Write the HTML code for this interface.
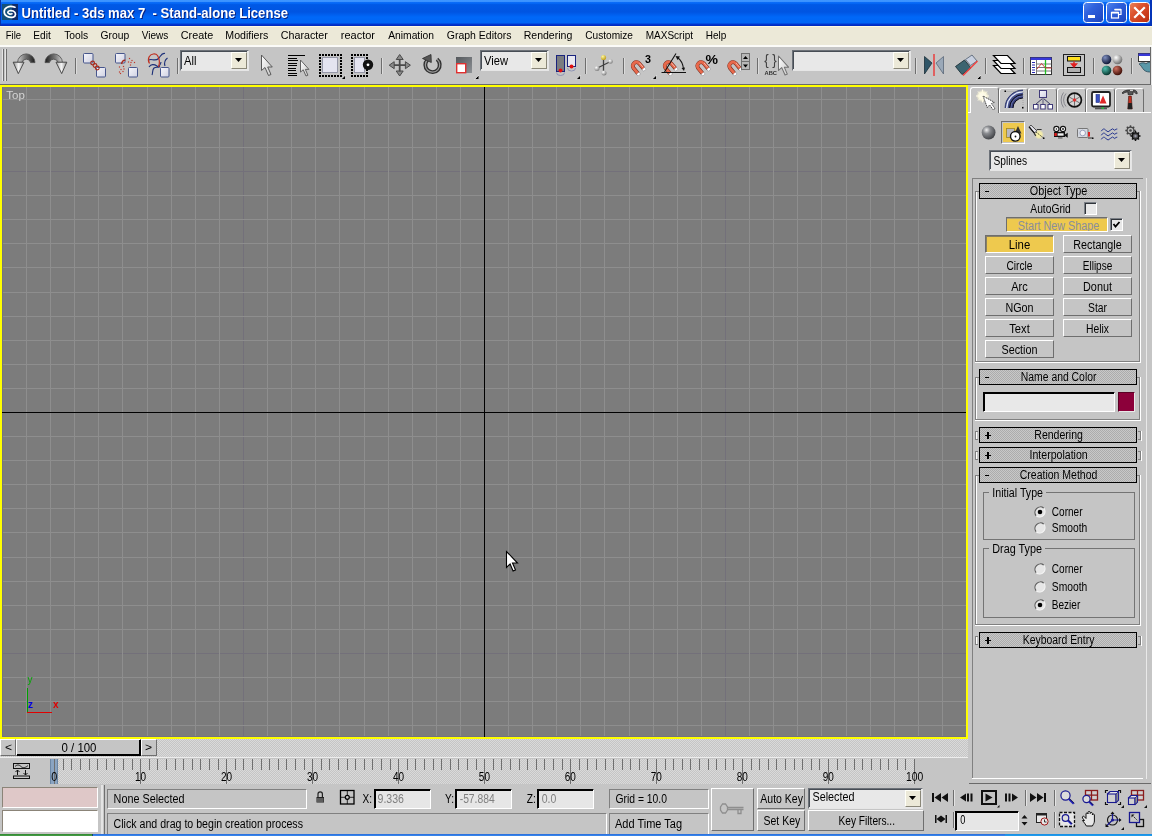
<!DOCTYPE html>
<html><head><meta charset="utf-8"><title>Untitled - 3ds max 7 - Stand-alone License</title>
<style>
html,body{margin:0;padding:0;background:#c5c5c5;overflow:hidden}
#app{position:relative;width:1152px;height:836px;overflow:hidden;background:#c5c5c5;font-family:"Liberation Sans",sans-serif}
#app div,#app svg{position:absolute;box-sizing:content-box}
#txt{will-change:transform}
#txt text{font-family:"Liberation Sans",sans-serif;white-space:pre}
</style></head><body><div id="app">
<div style="left:0px;top:0px;width:1152px;height:26px;background:linear-gradient(#3d96ff 0,#3a92ff 1.6px,#0a6cf8 2.4px,#0466f4 3.6px,#0059e6 4.6px,#0055e2 12px,#0060f0 15px,#0068f8 17px,#0066f6 22.6px,#0048dc 23.8px,#0030cc 24.6px,#0028ba 26px);"></div>
<div style="left:0px;top:0px;width:1px;height:26px;background:#0831a8;"></div>
<div style="left:1150px;top:0px;width:2px;height:26px;background:#0434b8;"></div>
<svg style="left:2px;top:4px" width="16" height="16" viewBox="0 0 16 16"><rect width="16" height="16" fill="#14507a"/><rect x="10" y="0" width="6" height="16" fill="#102a66"/><path d="M13 3.2C7 1.2 2 3.5 2.2 8c.2 4.5 5 6 9 5.2 3-1 3.2-4.8 0-6.2-2.4-.8-5.2-.4-5.4 1.400c.3 1.5 2.4 2 4.2 1.4" fill="none" stroke="#fff" stroke-width="1.7" stroke-linecap="round"/></svg>
<div style="left:1083px;top:2px;width:19px;height:19px;border:1px solid #fff;border-radius:3.5px;background:linear-gradient(135deg,#4f84ee 0,#2f62dd 35%,#2450cc 75%,#1c44b8 100%)"></div>
<div style="left:1106px;top:2px;width:19px;height:19px;border:1px solid #fff;border-radius:3.5px;background:linear-gradient(135deg,#4f84ee 0,#2f62dd 35%,#2450cc 75%,#1c44b8 100%)"></div>
<div style="left:1129px;top:2px;width:19px;height:19px;border:1px solid #fff;border-radius:3.5px;background:linear-gradient(135deg,#e8835a 0,#dd5530 35%,#c93a1a 75%,#b83010 100%)"></div>
<div style="left:1088px;top:15px;width:7px;height:3px;background:#fff;"></div>
<svg style="left:1106px;top:2px" width="21" height="21" viewBox="0 0 21 21"><path d="M8.5 7.500h6.500v5h-2" fill="none" stroke="#fff" stroke-width="1.2"/><rect x="5.5" y="10.5" width="7" height="5.5" fill="none" stroke="#fff" stroke-width="1.2"/><path d="M5.5 10.700h7M8.5 7.700h6.5" stroke="#fff" stroke-width="1.8"/></svg>
<svg style="left:1129px;top:2px" width="21" height="21" viewBox="0 0 21 21"><path d="M6 6l9 9M15 6l-9 9" stroke="#fff" stroke-width="2.2" stroke-linecap="square"/></svg>
<div style="left:0px;top:26px;width:1152px;height:19px;background:#ece9d8;"></div>
<div style="left:0px;top:26px;width:1152px;height:1px;background:#fdfae2;"></div>
<div style="left:0px;top:45px;width:1152px;height:2px;background:#fbfbf8;"></div>
<div style="left:0px;top:47px;width:1152px;height:37px;background:#c5c5c5;"></div>
<div style="left:0px;top:84px;width:1151px;height:1px;background:#6a6a6a;"></div>
<div style="left:1150px;top:47px;width:1px;height:38px;background:#6a6a6a;"></div>
<div style="left:1151px;top:47px;width:1px;height:38px;background:#e8e8e8;"></div>
<div style="left:3px;top:49px;width:1px;height:32px;background:#6e6e6e;"></div>
<div style="left:2px;top:49px;width:1px;height:32px;background:#e4e4e4;"></div>
<div style="left:6px;top:49px;width:1px;height:32px;background:#6e6e6e;"></div>
<div style="left:5px;top:49px;width:1px;height:32px;background:#e4e4e4;"></div>
<div style="left:75px;top:58px;width:1px;height:16px;background:#6e6e6e;"></div>
<div style="left:76px;top:58px;width:1px;height:16px;background:#dcdcdc;"></div>
<div style="left:177px;top:58px;width:1px;height:16px;background:#6e6e6e;"></div>
<div style="left:178px;top:58px;width:1px;height:16px;background:#dcdcdc;"></div>
<div style="left:381px;top:58px;width:1px;height:16px;background:#6e6e6e;"></div>
<div style="left:382px;top:58px;width:1px;height:16px;background:#dcdcdc;"></div>
<div style="left:585px;top:58px;width:1px;height:16px;background:#6e6e6e;"></div>
<div style="left:586px;top:58px;width:1px;height:16px;background:#dcdcdc;"></div>
<div style="left:623px;top:58px;width:1px;height:16px;background:#6e6e6e;"></div>
<div style="left:624px;top:58px;width:1px;height:16px;background:#dcdcdc;"></div>
<div style="left:757px;top:58px;width:1px;height:16px;background:#6e6e6e;"></div>
<div style="left:758px;top:58px;width:1px;height:16px;background:#dcdcdc;"></div>
<div style="left:915px;top:58px;width:1px;height:16px;background:#6e6e6e;"></div>
<div style="left:916px;top:58px;width:1px;height:16px;background:#dcdcdc;"></div>
<div style="left:985px;top:58px;width:1px;height:16px;background:#6e6e6e;"></div>
<div style="left:986px;top:58px;width:1px;height:16px;background:#dcdcdc;"></div>
<div style="left:1023px;top:58px;width:1px;height:16px;background:#6e6e6e;"></div>
<div style="left:1024px;top:58px;width:1px;height:16px;background:#dcdcdc;"></div>
<div style="left:1093px;top:58px;width:1px;height:16px;background:#6e6e6e;"></div>
<div style="left:1094px;top:58px;width:1px;height:16px;background:#dcdcdc;"></div>
<div style="left:1131px;top:58px;width:1px;height:16px;background:#6e6e6e;"></div>
<div style="left:1132px;top:58px;width:1px;height:16px;background:#dcdcdc;"></div>
<div style="left:180px;top:50px;width:67px;height:19px;background:#e8e8e8;border:1px solid;border-color:#6c7178 #e6e6e6 #e6e6e6 #6c7178;"></div>
<div style="left:181px;top:51px;width:66px;height:1px;background:#474d55;"></div>
<div style="left:181px;top:51px;width:1px;height:18px;background:#474d55;"></div>
<div style="left:231px;top:52px;width:14px;height:15px;background:#ece9d8;border:1px solid;border-color:#fffff8 #8a8778 #8a8778 #fffff8;"></div>
<svg style="left:235px;top:58px" width="8" height="5" viewBox="0 0 8 5"><path d="M0 0h7l-3.5 4z" fill="#000"/></svg>
<div style="left:480px;top:50px;width:67px;height:19px;background:#e8e8e8;border:1px solid;border-color:#6c7178 #e6e6e6 #e6e6e6 #6c7178;"></div>
<div style="left:481px;top:51px;width:66px;height:1px;background:#474d55;"></div>
<div style="left:481px;top:51px;width:1px;height:18px;background:#474d55;"></div>
<div style="left:531px;top:52px;width:14px;height:15px;background:#ece9d8;border:1px solid;border-color:#fffff8 #8a8778 #8a8778 #fffff8;"></div>
<svg style="left:535px;top:58px" width="8" height="5" viewBox="0 0 8 5"><path d="M0 0h7l-3.5 4z" fill="#000"/></svg>
<div style="left:792px;top:50px;width:117px;height:19px;background:#e8e8e8;border:1px solid;border-color:#6c7178 #e6e6e6 #e6e6e6 #6c7178;"></div>
<div style="left:793px;top:51px;width:116px;height:1px;background:#474d55;"></div>
<div style="left:793px;top:51px;width:1px;height:18px;background:#474d55;"></div>
<div style="left:893px;top:52px;width:14px;height:15px;background:#ece9d8;border:1px solid;border-color:#fffff8 #8a8778 #8a8778 #fffff8;"></div>
<svg style="left:897px;top:58px" width="8" height="5" viewBox="0 0 8 5"><path d="M0 0h7l-3.5 4z" fill="#000"/></svg>
<div style="left:0px;top:85px;width:964px;height:650px;background:#7c7c7c;border:2px solid #ffff00"></div>
<svg style="left:0px;top:0px" width="968" height="740" viewBox="0 0 968 740" shape-rendering="crispEdges"><rect x="243" y="87" width="1" height="650" fill="#73707a"/><rect x="725" y="87" width="1" height="650" fill="#73707a"/><rect x="3" y="171" width="963" height="1" fill="#73707a"/><rect x="3" y="653" width="963" height="1" fill="#73707a"/><rect x="26" y="87" width="1" height="650" fill="#8e8e8e"/><rect x="50" y="87" width="1" height="650" fill="#8e8e8e"/><rect x="74" y="87" width="1" height="650" fill="#8e8e8e"/><rect x="98" y="87" width="1" height="650" fill="#8e8e8e"/><rect x="122" y="87" width="1" height="650" fill="#8e8e8e"/><rect x="147" y="87" width="1" height="650" fill="#8e8e8e"/><rect x="171" y="87" width="1" height="650" fill="#8e8e8e"/><rect x="195" y="87" width="1" height="650" fill="#8e8e8e"/><rect x="219" y="87" width="1" height="650" fill="#8e8e8e"/><rect x="267" y="87" width="1" height="650" fill="#8e8e8e"/><rect x="291" y="87" width="1" height="650" fill="#8e8e8e"/><rect x="315" y="87" width="1" height="650" fill="#8e8e8e"/><rect x="339" y="87" width="1" height="650" fill="#8e8e8e"/><rect x="364" y="87" width="1" height="650" fill="#8e8e8e"/><rect x="388" y="87" width="1" height="650" fill="#8e8e8e"/><rect x="412" y="87" width="1" height="650" fill="#8e8e8e"/><rect x="436" y="87" width="1" height="650" fill="#8e8e8e"/><rect x="460" y="87" width="1" height="650" fill="#8e8e8e"/><rect x="508" y="87" width="1" height="650" fill="#8e8e8e"/><rect x="532" y="87" width="1" height="650" fill="#8e8e8e"/><rect x="556" y="87" width="1" height="650" fill="#8e8e8e"/><rect x="580" y="87" width="1" height="650" fill="#8e8e8e"/><rect x="604" y="87" width="1" height="650" fill="#8e8e8e"/><rect x="629" y="87" width="1" height="650" fill="#8e8e8e"/><rect x="653" y="87" width="1" height="650" fill="#8e8e8e"/><rect x="677" y="87" width="1" height="650" fill="#8e8e8e"/><rect x="701" y="87" width="1" height="650" fill="#8e8e8e"/><rect x="749" y="87" width="1" height="650" fill="#8e8e8e"/><rect x="773" y="87" width="1" height="650" fill="#8e8e8e"/><rect x="797" y="87" width="1" height="650" fill="#8e8e8e"/><rect x="821" y="87" width="1" height="650" fill="#8e8e8e"/><rect x="846" y="87" width="1" height="650" fill="#8e8e8e"/><rect x="870" y="87" width="1" height="650" fill="#8e8e8e"/><rect x="894" y="87" width="1" height="650" fill="#8e8e8e"/><rect x="918" y="87" width="1" height="650" fill="#8e8e8e"/><rect x="942" y="87" width="1" height="650" fill="#8e8e8e"/><rect x="3" y="99" width="963" height="1" fill="#8e8e8e"/><rect x="3" y="123" width="963" height="1" fill="#8e8e8e"/><rect x="3" y="147" width="963" height="1" fill="#8e8e8e"/><rect x="3" y="195" width="963" height="1" fill="#8e8e8e"/><rect x="3" y="219" width="963" height="1" fill="#8e8e8e"/><rect x="3" y="243" width="963" height="1" fill="#8e8e8e"/><rect x="3" y="267" width="963" height="1" fill="#8e8e8e"/><rect x="3" y="292" width="963" height="1" fill="#8e8e8e"/><rect x="3" y="316" width="963" height="1" fill="#8e8e8e"/><rect x="3" y="340" width="963" height="1" fill="#8e8e8e"/><rect x="3" y="364" width="963" height="1" fill="#8e8e8e"/><rect x="3" y="388" width="963" height="1" fill="#8e8e8e"/><rect x="3" y="436" width="963" height="1" fill="#8e8e8e"/><rect x="3" y="460" width="963" height="1" fill="#8e8e8e"/><rect x="3" y="484" width="963" height="1" fill="#8e8e8e"/><rect x="3" y="508" width="963" height="1" fill="#8e8e8e"/><rect x="3" y="532" width="963" height="1" fill="#8e8e8e"/><rect x="3" y="557" width="963" height="1" fill="#8e8e8e"/><rect x="3" y="581" width="963" height="1" fill="#8e8e8e"/><rect x="3" y="605" width="963" height="1" fill="#8e8e8e"/><rect x="3" y="629" width="963" height="1" fill="#8e8e8e"/><rect x="3" y="677" width="963" height="1" fill="#8e8e8e"/><rect x="3" y="701" width="963" height="1" fill="#8e8e8e"/><rect x="3" y="725" width="963" height="1" fill="#8e8e8e"/><rect x="2" y="87" width="1" height="650" fill="#737380"/><rect x="2" y="736" width="964" height="1" fill="#737380"/><rect x="484" y="87" width="1" height="650" fill="#000"/><rect x="2" y="412" width="964" height="1" fill="#000"/><rect x="27" y="688" width="1" height="25" fill="#00a000"/><rect x="27" y="712" width="25" height="1" fill="#e00000"/></svg>
<svg style="left:505px;top:550px" width="14" height="23" viewBox="0 0 14 23"><path d="M1.5 1.500v16l3.6-3.5 3 7 2.4-1-3-7h5z" fill="#fff" stroke="#000" stroke-width="1.1" stroke-linejoin="miter"/></svg>
<div style="left:0px;top:739px;width:968px;height:18px;background:repeating-conic-gradient(#dadada 0 25%, #c5c5c5 0 50%) 0 0/2px 2px;"></div>
<div style="left:0px;top:757px;width:968px;height:1px;background:#ededed;"></div>
<div style="left:0px;top:739px;width:14px;height:15px;background:#c5c5c5;border:1px solid;border-color:#fff #6e6e6e #6e6e6e #fff;"></div>
<div style="left:141px;top:739px;width:14px;height:15px;background:#c5c5c5;border:1px solid;border-color:#fff #6e6e6e #6e6e6e #fff;"></div>
<div style="left:16px;top:739px;width:123px;height:15px;background:#c5c5c5;border:1px solid;border-color:#fff #000 #000 #fff;"></div>
<div style="left:17px;top:754px;width:124px;height:1px;background:#000;"></div>
<div style="left:139px;top:740px;width:1px;height:15px;background:#000;"></div>
<div style="left:50px;top:759px;width:865px;height:25px;background:repeating-conic-gradient(#dadada 0 25%, #c5c5c5 0 50%) 0 0/2px 2px;"></div>
<div style="left:50px;top:759px;width:8px;height:25px;background:#8aa4c2;"></div>
<div style="left:50px;top:759px;width:1px;height:25px;background:#6d87a5;"></div>
<div style="left:57px;top:759px;width:1px;height:25px;background:#6d87a5;"></div>
<svg style="left:0px;top:0px" width="968" height="790" viewBox="0 0 968 790" shape-rendering="crispEdges"><rect x="54" y="759" width="1" height="25" fill="#6f6f6f"/><rect x="63" y="759" width="1" height="11" fill="#6f6f6f"/><rect x="71" y="759" width="1" height="11" fill="#6f6f6f"/><rect x="80" y="759" width="1" height="11" fill="#6f6f6f"/><rect x="89" y="759" width="1" height="11" fill="#6f6f6f"/><rect x="97" y="759" width="1" height="11" fill="#6f6f6f"/><rect x="106" y="759" width="1" height="11" fill="#6f6f6f"/><rect x="114" y="759" width="1" height="11" fill="#6f6f6f"/><rect x="123" y="759" width="1" height="11" fill="#6f6f6f"/><rect x="132" y="759" width="1" height="11" fill="#6f6f6f"/><rect x="140" y="759" width="1" height="25" fill="#6f6f6f"/><rect x="149" y="759" width="1" height="11" fill="#6f6f6f"/><rect x="157" y="759" width="1" height="11" fill="#6f6f6f"/><rect x="166" y="759" width="1" height="11" fill="#6f6f6f"/><rect x="175" y="759" width="1" height="11" fill="#6f6f6f"/><rect x="183" y="759" width="1" height="11" fill="#6f6f6f"/><rect x="192" y="759" width="1" height="11" fill="#6f6f6f"/><rect x="200" y="759" width="1" height="11" fill="#6f6f6f"/><rect x="209" y="759" width="1" height="11" fill="#6f6f6f"/><rect x="218" y="759" width="1" height="11" fill="#6f6f6f"/><rect x="226" y="759" width="1" height="25" fill="#6f6f6f"/><rect x="235" y="759" width="1" height="11" fill="#6f6f6f"/><rect x="243" y="759" width="1" height="11" fill="#6f6f6f"/><rect x="252" y="759" width="1" height="11" fill="#6f6f6f"/><rect x="261" y="759" width="1" height="11" fill="#6f6f6f"/><rect x="269" y="759" width="1" height="11" fill="#6f6f6f"/><rect x="278" y="759" width="1" height="11" fill="#6f6f6f"/><rect x="286" y="759" width="1" height="11" fill="#6f6f6f"/><rect x="295" y="759" width="1" height="11" fill="#6f6f6f"/><rect x="304" y="759" width="1" height="11" fill="#6f6f6f"/><rect x="312" y="759" width="1" height="25" fill="#6f6f6f"/><rect x="321" y="759" width="1" height="11" fill="#6f6f6f"/><rect x="329" y="759" width="1" height="11" fill="#6f6f6f"/><rect x="338" y="759" width="1" height="11" fill="#6f6f6f"/><rect x="347" y="759" width="1" height="11" fill="#6f6f6f"/><rect x="355" y="759" width="1" height="11" fill="#6f6f6f"/><rect x="364" y="759" width="1" height="11" fill="#6f6f6f"/><rect x="372" y="759" width="1" height="11" fill="#6f6f6f"/><rect x="381" y="759" width="1" height="11" fill="#6f6f6f"/><rect x="390" y="759" width="1" height="11" fill="#6f6f6f"/><rect x="398" y="759" width="1" height="25" fill="#6f6f6f"/><rect x="407" y="759" width="1" height="11" fill="#6f6f6f"/><rect x="415" y="759" width="1" height="11" fill="#6f6f6f"/><rect x="424" y="759" width="1" height="11" fill="#6f6f6f"/><rect x="433" y="759" width="1" height="11" fill="#6f6f6f"/><rect x="441" y="759" width="1" height="11" fill="#6f6f6f"/><rect x="450" y="759" width="1" height="11" fill="#6f6f6f"/><rect x="458" y="759" width="1" height="11" fill="#6f6f6f"/><rect x="467" y="759" width="1" height="11" fill="#6f6f6f"/><rect x="476" y="759" width="1" height="11" fill="#6f6f6f"/><rect x="484" y="759" width="1" height="25" fill="#6f6f6f"/><rect x="493" y="759" width="1" height="11" fill="#6f6f6f"/><rect x="501" y="759" width="1" height="11" fill="#6f6f6f"/><rect x="510" y="759" width="1" height="11" fill="#6f6f6f"/><rect x="519" y="759" width="1" height="11" fill="#6f6f6f"/><rect x="527" y="759" width="1" height="11" fill="#6f6f6f"/><rect x="536" y="759" width="1" height="11" fill="#6f6f6f"/><rect x="544" y="759" width="1" height="11" fill="#6f6f6f"/><rect x="553" y="759" width="1" height="11" fill="#6f6f6f"/><rect x="562" y="759" width="1" height="11" fill="#6f6f6f"/><rect x="570" y="759" width="1" height="25" fill="#6f6f6f"/><rect x="579" y="759" width="1" height="11" fill="#6f6f6f"/><rect x="587" y="759" width="1" height="11" fill="#6f6f6f"/><rect x="596" y="759" width="1" height="11" fill="#6f6f6f"/><rect x="605" y="759" width="1" height="11" fill="#6f6f6f"/><rect x="613" y="759" width="1" height="11" fill="#6f6f6f"/><rect x="622" y="759" width="1" height="11" fill="#6f6f6f"/><rect x="630" y="759" width="1" height="11" fill="#6f6f6f"/><rect x="639" y="759" width="1" height="11" fill="#6f6f6f"/><rect x="647" y="759" width="1" height="11" fill="#6f6f6f"/><rect x="656" y="759" width="1" height="25" fill="#6f6f6f"/><rect x="665" y="759" width="1" height="11" fill="#6f6f6f"/><rect x="673" y="759" width="1" height="11" fill="#6f6f6f"/><rect x="682" y="759" width="1" height="11" fill="#6f6f6f"/><rect x="690" y="759" width="1" height="11" fill="#6f6f6f"/><rect x="699" y="759" width="1" height="11" fill="#6f6f6f"/><rect x="708" y="759" width="1" height="11" fill="#6f6f6f"/><rect x="716" y="759" width="1" height="11" fill="#6f6f6f"/><rect x="725" y="759" width="1" height="11" fill="#6f6f6f"/><rect x="733" y="759" width="1" height="11" fill="#6f6f6f"/><rect x="742" y="759" width="1" height="25" fill="#6f6f6f"/><rect x="751" y="759" width="1" height="11" fill="#6f6f6f"/><rect x="759" y="759" width="1" height="11" fill="#6f6f6f"/><rect x="768" y="759" width="1" height="11" fill="#6f6f6f"/><rect x="776" y="759" width="1" height="11" fill="#6f6f6f"/><rect x="785" y="759" width="1" height="11" fill="#6f6f6f"/><rect x="794" y="759" width="1" height="11" fill="#6f6f6f"/><rect x="802" y="759" width="1" height="11" fill="#6f6f6f"/><rect x="811" y="759" width="1" height="11" fill="#6f6f6f"/><rect x="819" y="759" width="1" height="11" fill="#6f6f6f"/><rect x="828" y="759" width="1" height="25" fill="#6f6f6f"/><rect x="837" y="759" width="1" height="11" fill="#6f6f6f"/><rect x="845" y="759" width="1" height="11" fill="#6f6f6f"/><rect x="854" y="759" width="1" height="11" fill="#6f6f6f"/><rect x="862" y="759" width="1" height="11" fill="#6f6f6f"/><rect x="871" y="759" width="1" height="11" fill="#6f6f6f"/><rect x="880" y="759" width="1" height="11" fill="#6f6f6f"/><rect x="888" y="759" width="1" height="11" fill="#6f6f6f"/><rect x="897" y="759" width="1" height="11" fill="#6f6f6f"/><rect x="905" y="759" width="1" height="11" fill="#6f6f6f"/><rect x="914" y="759" width="1" height="25" fill="#6f6f6f"/></svg>
<div style="left:0px;top:784px;width:968px;height:1px;background:#c5c5c5;"></div>
<div style="left:2px;top:787px;width:94px;height:19px;background:#dfc8c8;border:1px solid;border-color:#8b8478 #fff #fff #8b8478;"></div>
<div style="left:2px;top:810px;width:94px;height:20px;background:#ffffff;border:1px solid;border-color:#8b8478 #fff #fff #8b8478;"></div>
<div style="left:101px;top:785px;width:2px;height:49px;background:#e4e4e4;"></div>
<div style="left:104px;top:785px;width:1px;height:49px;background:#707070;"></div>
<div style="left:107px;top:789px;width:198px;height:18px;background:#c5c5c5;border:1px solid;border-color:#808080 #fff #fff #808080;"></div>
<div style="left:107px;top:813px;width:498px;height:20px;background:#c5c5c5;border:1px solid;border-color:#808080 #fff #fff #808080;"></div>
<div style="left:374px;top:789px;width:55px;height:18px;background:#e6e6e6;border:1px solid;border-color:#000 #fff #fff #000;"></div>
<div style="left:375px;top:790px;width:55px;height:1px;background:#000;"></div>
<div style="left:375px;top:790px;width:1px;height:18px;background:#000;"></div>
<div style="left:455px;top:789px;width:55px;height:18px;background:#e6e6e6;border:1px solid;border-color:#000 #fff #fff #000;"></div>
<div style="left:456px;top:790px;width:55px;height:1px;background:#000;"></div>
<div style="left:456px;top:790px;width:1px;height:18px;background:#000;"></div>
<div style="left:537px;top:789px;width:55px;height:18px;background:#e6e6e6;border:1px solid;border-color:#000 #fff #fff #000;"></div>
<div style="left:538px;top:790px;width:55px;height:1px;background:#000;"></div>
<div style="left:538px;top:790px;width:1px;height:18px;background:#000;"></div>
<div style="left:609px;top:789px;width:98px;height:18px;background:#c5c5c5;border:1px solid;border-color:#808080 #fff #fff #808080;"></div>
<div style="left:609px;top:813px;width:98px;height:20px;background:#c5c5c5;border:1px solid;border-color:#808080 #fff #fff #808080;"></div>
<div style="left:711px;top:788px;width:41px;height:41px;background:#c5c5c5;border:1px solid;border-color:#fff #6e6e6e #6e6e6e #fff;"></div>
<div style="left:757px;top:788px;width:46px;height:19px;background:#c5c5c5;border:1px solid;border-color:#fff #6e6e6e #6e6e6e #fff;"></div>
<div style="left:757px;top:810px;width:46px;height:19px;background:#c5c5c5;border:1px solid;border-color:#fff #6e6e6e #6e6e6e #fff;"></div>
<div style="left:808px;top:788px;width:113px;height:19px;background:#e8e8e8;border:1px solid;border-color:#6c7178 #e6e6e6 #e6e6e6 #6c7178;"></div>
<div style="left:809px;top:789px;width:112px;height:1px;background:#474d55;"></div>
<div style="left:809px;top:789px;width:1px;height:18px;background:#474d55;"></div>
<div style="left:905px;top:790px;width:14px;height:15px;background:#ece9d8;border:1px solid;border-color:#fffff8 #8a8778 #8a8778 #fffff8;"></div>
<svg style="left:909px;top:796px" width="8" height="5" viewBox="0 0 8 5"><path d="M0 0h7l-3.5 4z" fill="#000"/></svg>
<div style="left:808px;top:810px;width:114px;height:19px;background:#c5c5c5;border:1px solid;border-color:#fff #6e6e6e #6e6e6e #fff;"></div>
<div style="left:955px;top:811px;width:62px;height:18px;background:#e6e6e6;border:1px solid;border-color:#000 #fff #fff #000;"></div>
<div style="left:956px;top:812px;width:62px;height:1px;background:#000;"></div>
<div style="left:956px;top:812px;width:1px;height:18px;background:#000;"></div>
<div style="left:953px;top:790px;width:1px;height:16px;background:#6e6e6e;"></div>
<div style="left:954px;top:790px;width:1px;height:16px;background:#e4e4e4;"></div>
<div style="left:1025px;top:790px;width:1px;height:16px;background:#6e6e6e;"></div>
<div style="left:1026px;top:790px;width:1px;height:16px;background:#e4e4e4;"></div>
<div style="left:1054px;top:790px;width:1px;height:16px;background:#6e6e6e;"></div>
<div style="left:1055px;top:790px;width:1px;height:16px;background:#e4e4e4;"></div>
<div style="left:953px;top:812px;width:1px;height:16px;background:#6e6e6e;"></div>
<div style="left:954px;top:812px;width:1px;height:16px;background:#e4e4e4;"></div>
<div style="left:1054px;top:812px;width:1px;height:16px;background:#6e6e6e;"></div>
<div style="left:1055px;top:812px;width:1px;height:16px;background:#e4e4e4;"></div>
<div style="left:0px;top:834px;width:1152px;height:2px;background:linear-gradient(#2a6ad8,#3a8cf0);"></div>
<div style="left:0px;top:834px;width:92px;height:2px;background:linear-gradient(#2d8a2d,#4a9c4a);"></div>
<div style="left:92px;top:834px;width:1px;height:2px;background:#1c4a60;"></div>
<div style="left:1005px;top:834px;width:147px;height:2px;background:linear-gradient(#1a8ce0,#22a0f0);"></div>
<div style="left:968px;top:85px;width:184px;height:699px;background:#c5c5c5;"></div>
<div style="left:969px;top:783px;width:182px;height:1px;background:#6a6a6a;"></div>
<div style="left:968px;top:112px;width:183px;height:1px;background:#fff;"></div>
<div style="left:970px;top:87px;width:27px;height:25px;background:#c5c5c5;border:1px solid;border-color:#fff #6e6e6e #c5c5c5 #fff;border-bottom:none;border-radius:3px 3px 0 0"></div>
<div style="left:999px;top:88px;width:27px;height:23px;background:#c5c5c5;border:1px solid;border-color:#fff #6e6e6e #c5c5c5 #fff;border-bottom:none;border-radius:3px 3px 0 0"></div>
<div style="left:1028px;top:88px;width:27px;height:23px;background:#c5c5c5;border:1px solid;border-color:#fff #6e6e6e #c5c5c5 #fff;border-bottom:none;border-radius:3px 3px 0 0"></div>
<div style="left:1057px;top:88px;width:27px;height:23px;background:#c5c5c5;border:1px solid;border-color:#fff #6e6e6e #c5c5c5 #fff;border-bottom:none;border-radius:3px 3px 0 0"></div>
<div style="left:1086px;top:88px;width:27px;height:23px;background:#c5c5c5;border:1px solid;border-color:#fff #6e6e6e #c5c5c5 #fff;border-bottom:none;border-radius:3px 3px 0 0"></div>
<div style="left:1115px;top:88px;width:27px;height:23px;background:#c5c5c5;border:1px solid;border-color:#fff #6e6e6e #c5c5c5 #fff;border-bottom:none;border-radius:3px 3px 0 0"></div>
<div style="left:1001px;top:121px;width:22px;height:21px;background:#c5c5c5;border:1px solid;border-color:#6e6e6e #fff #fff #6e6e6e;"></div>
<div style="left:1003px;top:123px;width:21px;height:19px;background:#eec94e;"></div>
<div style="left:989px;top:150px;width:141px;height:19px;background:#e8e8e8;border:1px solid;border-color:#6c7178 #e6e6e6 #e6e6e6 #6c7178;"></div>
<div style="left:990px;top:151px;width:140px;height:1px;background:#474d55;"></div>
<div style="left:990px;top:151px;width:1px;height:18px;background:#474d55;"></div>
<div style="left:1114px;top:152px;width:14px;height:15px;background:#ece9d8;border:1px solid;border-color:#fffff8 #8a8778 #8a8778 #fffff8;"></div>
<svg style="left:1118px;top:158px" width="8" height="5" viewBox="0 0 8 5"><path d="M0 0h7l-3.5 4z" fill="#000"/></svg>
<div style="left:972px;top:178px;width:171px;height:1px;background:#808080;"></div>
<div style="left:972px;top:178px;width:1px;height:601px;background:#808080;"></div>
<div style="left:972px;top:778px;width:171px;height:1px;background:#fff;"></div>
<div style="left:1146px;top:178px;width:1px;height:601px;background:#e9e9e9;"></div>
<div style="left:975px;top:191px;width:1px;height:171px;background:#808080;"></div>
<div style="left:976px;top:192px;width:1px;height:170px;background:#fff;"></div>
<div style="left:1139px;top:191px;width:1px;height:171px;background:#808080;"></div>
<div style="left:1140px;top:191px;width:1px;height:172px;background:#fff;"></div>
<div style="left:975px;top:361px;width:165px;height:1px;background:#808080;"></div>
<div style="left:975px;top:362px;width:166px;height:1px;background:#fff;"></div>
<div style="left:975px;top:191px;width:165px;height:1px;background:#808080;"></div>
<div style="left:979px;top:183px;width:156px;height:14px;border:1px solid #000;background:repeating-conic-gradient(#c8c8c8 0 25%, #acacac 0 50%) 0 0/2px 2px"></div>
<div style="left:985px;top:191px;width:4px;height:1px;background:#000;"></div>
<div style="left:975px;top:377px;width:1px;height:43px;background:#808080;"></div>
<div style="left:976px;top:378px;width:1px;height:42px;background:#fff;"></div>
<div style="left:1139px;top:377px;width:1px;height:43px;background:#808080;"></div>
<div style="left:1140px;top:377px;width:1px;height:44px;background:#fff;"></div>
<div style="left:975px;top:419px;width:165px;height:1px;background:#808080;"></div>
<div style="left:975px;top:420px;width:166px;height:1px;background:#fff;"></div>
<div style="left:975px;top:377px;width:165px;height:1px;background:#808080;"></div>
<div style="left:979px;top:369px;width:156px;height:14px;border:1px solid #000;background:repeating-conic-gradient(#c8c8c8 0 25%, #acacac 0 50%) 0 0/2px 2px"></div>
<div style="left:985px;top:377px;width:4px;height:1px;background:#000;"></div>
<div style="left:975px;top:431px;width:1px;height:9px;background:#808080;"></div>
<div style="left:976px;top:431px;width:2px;height:1px;background:#808080;"></div>
<div style="left:976px;top:439px;width:2px;height:1px;background:#808080;"></div>
<div style="left:976px;top:432px;width:1px;height:7px;background:#fff;"></div>
<div style="left:1140px;top:431px;width:1px;height:9px;background:#808080;"></div>
<div style="left:1138px;top:431px;width:2px;height:1px;background:#808080;"></div>
<div style="left:1138px;top:439px;width:2px;height:1px;background:#808080;"></div>
<div style="left:1141px;top:431px;width:1px;height:10px;background:#fff;"></div>
<div style="left:979px;top:427px;width:156px;height:14px;border:1px solid #000;background:repeating-conic-gradient(#c8c8c8 0 25%, #acacac 0 50%) 0 0/2px 2px"></div>
<div style="left:985px;top:435px;width:6px;height:1px;background:#000;"></div>
<div style="left:987px;top:432px;width:2px;height:7px;background:#000;"></div>
<div style="left:975px;top:451px;width:1px;height:9px;background:#808080;"></div>
<div style="left:976px;top:451px;width:2px;height:1px;background:#808080;"></div>
<div style="left:976px;top:459px;width:2px;height:1px;background:#808080;"></div>
<div style="left:976px;top:452px;width:1px;height:7px;background:#fff;"></div>
<div style="left:1140px;top:451px;width:1px;height:9px;background:#808080;"></div>
<div style="left:1138px;top:451px;width:2px;height:1px;background:#808080;"></div>
<div style="left:1138px;top:459px;width:2px;height:1px;background:#808080;"></div>
<div style="left:1141px;top:451px;width:1px;height:10px;background:#fff;"></div>
<div style="left:979px;top:447px;width:156px;height:14px;border:1px solid #000;background:repeating-conic-gradient(#c8c8c8 0 25%, #acacac 0 50%) 0 0/2px 2px"></div>
<div style="left:985px;top:455px;width:6px;height:1px;background:#000;"></div>
<div style="left:987px;top:452px;width:2px;height:7px;background:#000;"></div>
<div style="left:975px;top:475px;width:1px;height:150px;background:#808080;"></div>
<div style="left:976px;top:476px;width:1px;height:149px;background:#fff;"></div>
<div style="left:1139px;top:475px;width:1px;height:150px;background:#808080;"></div>
<div style="left:1140px;top:475px;width:1px;height:151px;background:#fff;"></div>
<div style="left:975px;top:624px;width:165px;height:1px;background:#808080;"></div>
<div style="left:975px;top:625px;width:166px;height:1px;background:#fff;"></div>
<div style="left:975px;top:475px;width:165px;height:1px;background:#808080;"></div>
<div style="left:979px;top:467px;width:156px;height:14px;border:1px solid #000;background:repeating-conic-gradient(#c8c8c8 0 25%, #acacac 0 50%) 0 0/2px 2px"></div>
<div style="left:985px;top:475px;width:4px;height:1px;background:#000;"></div>
<div style="left:975px;top:636px;width:1px;height:9px;background:#808080;"></div>
<div style="left:976px;top:636px;width:2px;height:1px;background:#808080;"></div>
<div style="left:976px;top:644px;width:2px;height:1px;background:#808080;"></div>
<div style="left:976px;top:637px;width:1px;height:7px;background:#fff;"></div>
<div style="left:1140px;top:636px;width:1px;height:9px;background:#808080;"></div>
<div style="left:1138px;top:636px;width:2px;height:1px;background:#808080;"></div>
<div style="left:1138px;top:644px;width:2px;height:1px;background:#808080;"></div>
<div style="left:1141px;top:636px;width:1px;height:10px;background:#fff;"></div>
<div style="left:979px;top:632px;width:156px;height:14px;border:1px solid #000;background:repeating-conic-gradient(#c8c8c8 0 25%, #acacac 0 50%) 0 0/2px 2px"></div>
<div style="left:985px;top:640px;width:6px;height:1px;background:#000;"></div>
<div style="left:987px;top:637px;width:2px;height:7px;background:#000;"></div>
<div style="left:1084px;top:202px;width:11px;height:11px;background:#e8e8e8;border:1px solid;border-color:#7a7f86 #fff #fff #7a7f86;"></div>
<div style="left:1085px;top:203px;width:11px;height:1px;background:#30343a;"></div>
<div style="left:1085px;top:203px;width:1px;height:11px;background:#30343a;"></div>
<div style="left:1006px;top:217px;width:100px;height:13px;background:#eec94e;border:1px solid;border-color:#6e6e6e #fff #fff #6e6e6e;"></div>
<div style="left:1007px;top:218px;width:100px;height:1px;background:#b0a070;"></div>
<div style="left:1007px;top:218px;width:100px;height:13px;overflow:hidden"><svg style="left:0;top:0" width="100" height="13"><text x="10.8" y="11.6" font-size="12.5" font-family="Liberation Sans,sans-serif" fill="#8a8e9c" textLength="81.5" lengthAdjust="spacingAndGlyphs">Start New Shape</text></svg></div>
<div style="left:1110px;top:218px;width:11px;height:11px;background:#e8e8e8;border:1px solid;border-color:#7a7f86 #fff #fff #7a7f86;"></div>
<div style="left:1111px;top:219px;width:11px;height:1px;background:#30343a;"></div>
<div style="left:1111px;top:219px;width:1px;height:11px;background:#30343a;"></div>
<svg style="left:1110px;top:218px" width="13" height="13" viewBox="0 0 13 13"><path d="M3.5 6l2 2.5 4-4.5" fill="none" stroke="#000" stroke-width="1.8"/></svg>
<div style="left:985px;top:235px;width:67px;height:16px;background:#eec94e;border:1px solid;border-color:#6e6e6e #fff #fff #6e6e6e;"></div>
<div style="left:986px;top:236px;width:67px;height:1px;background:#8a8060;"></div>
<div style="left:986px;top:236px;width:1px;height:16px;background:#8a8060;"></div>
<div style="left:1063px;top:235px;width:67px;height:16px;background:#c5c5c5;border:1px solid;border-color:#fff #6e6e6e #6e6e6e #fff;"></div>
<div style="left:985px;top:256px;width:67px;height:16px;background:#c5c5c5;border:1px solid;border-color:#fff #6e6e6e #6e6e6e #fff;"></div>
<div style="left:1063px;top:256px;width:67px;height:16px;background:#c5c5c5;border:1px solid;border-color:#fff #6e6e6e #6e6e6e #fff;"></div>
<div style="left:985px;top:277px;width:67px;height:16px;background:#c5c5c5;border:1px solid;border-color:#fff #6e6e6e #6e6e6e #fff;"></div>
<div style="left:1063px;top:277px;width:67px;height:16px;background:#c5c5c5;border:1px solid;border-color:#fff #6e6e6e #6e6e6e #fff;"></div>
<div style="left:985px;top:298px;width:67px;height:16px;background:#c5c5c5;border:1px solid;border-color:#fff #6e6e6e #6e6e6e #fff;"></div>
<div style="left:1063px;top:298px;width:67px;height:16px;background:#c5c5c5;border:1px solid;border-color:#fff #6e6e6e #6e6e6e #fff;"></div>
<div style="left:985px;top:319px;width:67px;height:16px;background:#c5c5c5;border:1px solid;border-color:#fff #6e6e6e #6e6e6e #fff;"></div>
<div style="left:1063px;top:319px;width:67px;height:16px;background:#c5c5c5;border:1px solid;border-color:#fff #6e6e6e #6e6e6e #fff;"></div>
<div style="left:985px;top:340px;width:67px;height:16px;background:#c5c5c5;border:1px solid;border-color:#fff #6e6e6e #6e6e6e #fff;"></div>
<div style="left:983px;top:392px;width:130px;height:18px;background:#e8e8e8;border:1px solid;border-color:#000 #fff #fff #000;"></div>
<div style="left:984px;top:393px;width:130px;height:1px;background:#000;"></div>
<div style="left:984px;top:393px;width:1px;height:18px;background:#000;"></div>
<div style="left:1118px;top:392px;width:15px;height:18px;background:#8c003a;border:1px solid;border-color:#5a0024 #e8e8e8 #e8e8e8 #5a0024;"></div>
<div style="left:983px;top:492px;width:150px;height:46px;border:1px solid #747474"></div>
<div style="left:989.3px;top:491px;width:56.700000000000045px;height:3px;background:#c5c5c5;"></div>
<div style="left:983px;top:548px;width:150px;height:68px;border:1px solid #747474"></div>
<div style="left:989.3px;top:547px;width:55.700000000000045px;height:3px;background:#c5c5c5;"></div>
<svg style="left:1032.5px;top:504.5px" width="14" height="14" viewBox="0 0 14 14"><circle cx="7" cy="7" r="5.2" fill="#e6e6e6"/><path d="M3.2 10.8A5.4 5.4 0 0 1 10.8 3.2" fill="none" stroke="#5c5c5c" stroke-width="1.2"/><path d="M10.8 3.2A5.4 5.4 0 0 1 3.2 10.8" fill="none" stroke="#f4f4f4" stroke-width="1.1"/><circle cx="7" cy="7" r="2.3" fill="#000"/></svg>
<svg style="left:1032.5px;top:520.5px" width="14" height="14" viewBox="0 0 14 14"><circle cx="7" cy="7" r="5.2" fill="#e6e6e6"/><path d="M3.2 10.8A5.4 5.4 0 0 1 10.8 3.2" fill="none" stroke="#5c5c5c" stroke-width="1.2"/><path d="M10.8 3.2A5.4 5.4 0 0 1 3.2 10.8" fill="none" stroke="#f4f4f4" stroke-width="1.1"/></svg>
<svg style="left:1032.5px;top:561.5px" width="14" height="14" viewBox="0 0 14 14"><circle cx="7" cy="7" r="5.2" fill="#e6e6e6"/><path d="M3.2 10.8A5.4 5.4 0 0 1 10.8 3.2" fill="none" stroke="#5c5c5c" stroke-width="1.2"/><path d="M10.8 3.2A5.4 5.4 0 0 1 3.2 10.8" fill="none" stroke="#f4f4f4" stroke-width="1.1"/></svg>
<svg style="left:1032.5px;top:579.5px" width="14" height="14" viewBox="0 0 14 14"><circle cx="7" cy="7" r="5.2" fill="#e6e6e6"/><path d="M3.2 10.8A5.4 5.4 0 0 1 10.8 3.2" fill="none" stroke="#5c5c5c" stroke-width="1.2"/><path d="M10.8 3.2A5.4 5.4 0 0 1 3.2 10.8" fill="none" stroke="#f4f4f4" stroke-width="1.1"/></svg>
<svg style="left:1032.5px;top:597.5px" width="14" height="14" viewBox="0 0 14 14"><circle cx="7" cy="7" r="5.2" fill="#e6e6e6"/><path d="M3.2 10.8A5.4 5.4 0 0 1 10.8 3.2" fill="none" stroke="#5c5c5c" stroke-width="1.2"/><path d="M10.8 3.2A5.4 5.4 0 0 1 3.2 10.8" fill="none" stroke="#f4f4f4" stroke-width="1.1"/><circle cx="7" cy="7" r="2.3" fill="#000"/></svg>
<svg style="left:0;top:44px" width="1150" height="41" viewBox="0 44 1150 41"><defs>
<linearGradient id="gU" x1="0" x2="1" y1="0" y2="0"><stop offset="0" stop-color="#cfcfcf"/><stop offset=".4" stop-color="#7c7c7c"/><stop offset="1" stop-color="#1c1c1c"/></linearGradient>
<linearGradient id="gH" x1="0" x2="1" y1="0" y2="0"><stop offset="0" stop-color="#909090"/><stop offset=".5" stop-color="#f4f4f4"/><stop offset="1" stop-color="#a8a8a8"/></linearGradient>
<linearGradient id="gB" x1="0" x2="1" y1="0" y2="1"><stop offset="0" stop-color="#f6f6fb"/><stop offset="1" stop-color="#cfd1e2"/></linearGradient>
<linearGradient id="gD" x1="0" x2="1" y1="0" y2="1"><stop offset="0" stop-color="#54585c"/><stop offset="1" stop-color="#8e9296"/></linearGradient>
<linearGradient id="gC" x1="0" x2="1" y1="0" y2="1"><stop offset="0" stop-color="#ffffff"/><stop offset="1" stop-color="#c8c8c8"/></linearGradient>
<radialGradient id="gS1" cx=".35" cy=".3" r=".7"><stop offset="0" stop-color="#8090c0"/><stop offset="1" stop-color="#101838"/></radialGradient>
<radialGradient id="gS2" cx=".35" cy=".3" r=".7"><stop offset="0" stop-color="#ffffff"/><stop offset="1" stop-color="#707070"/></radialGradient>
<radialGradient id="gS3" cx=".35" cy=".3" r=".7"><stop offset="0" stop-color="#50c0b0"/><stop offset="1" stop-color="#083830"/></radialGradient>
<radialGradient id="gS4" cx=".35" cy=".3" r=".7"><stop offset="0" stop-color="#d07060"/><stop offset="1" stop-color="#401008"/></radialGradient>
<radialGradient id="gBall" cx=".35" cy=".3" r=".7"><stop offset="0" stop-color="#ffffff"/><stop offset="1" stop-color="#808080"/></radialGradient>
<radialGradient id="gBallY" cx=".35" cy=".3" r=".7"><stop offset="0" stop-color="#fff8a0"/><stop offset="1" stop-color="#c0a020"/></radialGradient>
</defs><g><path d="M35 62.6A8.7 8.7 0 0 0 17.6 62.6L22 62.6A4.4 4.4 0 0 1 30.6 62.6Z" fill="url(#gU)" stroke="#4a4a4a" stroke-width=".8"/>
<path d="M13.2 62.2L24 62.2L18.3 73.6Z" fill="url(#gH)" stroke="#3c3c3c" stroke-width=".9" stroke-linejoin="round"/></g><g transform="translate(80,0) scale(-1,1)"><g><path d="M35 62.6A8.7 8.7 0 0 0 17.6 62.6L22 62.6A4.4 4.4 0 0 1 30.6 62.6Z" fill="url(#gU)" stroke="#4a4a4a" stroke-width=".8"/>
<path d="M13.2 62.2L24 62.2L18.3 73.6Z" fill="url(#gH)" stroke="#3c3c3c" stroke-width=".9" stroke-linejoin="round"/></g></g><rect x="83.5" y="53.5" width="9.5" height="9.5" rx="1" fill="url(#gB)" stroke="#47568c" stroke-width="1"/><rect x="96.5" y="67.5" width="9" height="9.5" rx="1" fill="url(#gB)" stroke="#47568c" stroke-width="1"/><g fill="none" stroke="#a82a1c" stroke-width="1.1"><circle cx="92.6" cy="63" r="1.9"/><circle cx="95" cy="65.5" r="1.9"/><circle cx="97.3" cy="68" r="1.9"/></g><rect x="115.5" y="53.5" width="9.5" height="9.5" rx="1" fill="url(#gB)" stroke="#47568c" stroke-width="1"/><rect x="128.5" y="67.5" width="9" height="9.5" rx="1" fill="url(#gB)" stroke="#47568c" stroke-width="1"/><path d="M121.5 64c.5-2.5 2-4.2 3.8-3.6" fill="none" stroke="#a82a1c" stroke-width="1.5"/><rect x="128.9" y="57.9" width="1.2" height="1.2" fill="#c0392b"/><rect x="131.4" y="59.9" width="1.2" height="1.2" fill="#c0392b"/><rect x="127.9" y="61.4" width="1.2" height="1.2" fill="#c0392b"/><rect x="133.9" y="61.9" width="1.2" height="1.2" fill="#c0392b"/><rect x="130.4" y="61.9" width="1.2" height="1.2" fill="#c0392b"/><rect x="129.9" y="64.4" width="1.2" height="1.2" fill="#c0392b"/><rect x="118.9" y="66.4" width="1.2" height="1.2" fill="#c0392b"/><rect x="122.9" y="65.9" width="1.2" height="1.2" fill="#c0392b"/><rect x="120.4" y="68.9" width="1.2" height="1.2" fill="#c0392b"/><rect x="123.4" y="68.4" width="1.2" height="1.2" fill="#c0392b"/><rect x="122.4" y="70.9" width="1.2" height="1.2" fill="#c0392b"/><rect x="118.9" y="71.4" width="1.2" height="1.2" fill="#c0392b"/><rect x="119.9" y="72.9" width="1.2" height="1.2" fill="#c0392b"/><path d="M149 60c2-2 6 2 9.5-1.5 2-2 3-6 6.5-5M149 67c2-3 5-3 8-1 2 1 3.5-1 4-4M152 75c1-2 0-5 2-7 2-1.5 4 0 6-1.5M165 66c-1-3 0-6 2.5-8" fill="none" stroke="#1c2f78" stroke-width="1.1"/><path d="M158.5 67c1.5-4 .5-9-1-11.5-2-2.5-6.5-2-8.5 1.5-1 2.5-.5 5 .5 6.5" fill="none" stroke="#c03020" stroke-width="1.2"/><rect x="160.5" y="67.5" width="8.5" height="9.5" rx="1" fill="url(#gB)" stroke="#47568c" stroke-width="1"/><path transform="translate(261.5,55) scale(1.0)" d="M0 0V15.5L3.5 12.5L7 20.5L9.5 19.5L6.2 12H10.8Z" fill="url(#gC)" stroke="#5a5a5a" stroke-width="1.00" stroke-linejoin="round"/><rect x="288" y="55" width="17" height="1" fill="#000" shape-rendering="crispEdges"/><rect x="288" y="58" width="9" height="1" fill="#000" shape-rendering="crispEdges"/><rect x="288" y="60" width="10" height="1" fill="#000" shape-rendering="crispEdges"/><rect x="288" y="63" width="9" height="1" fill="#000" shape-rendering="crispEdges"/><rect x="288" y="65" width="9" height="1" fill="#000" shape-rendering="crispEdges"/><rect x="288" y="68" width="8" height="1" fill="#000" shape-rendering="crispEdges"/><rect x="288" y="70" width="8" height="1" fill="#000" shape-rendering="crispEdges"/><rect x="288" y="73" width="9" height="1" fill="#000" shape-rendering="crispEdges"/><rect x="288" y="75" width="9" height="1" fill="#000" shape-rendering="crispEdges"/><path transform="translate(300.5,60) scale(0.78)" d="M0 0V15.5L3.5 12.5L7 20.5L9.5 19.5L6.2 12H10.8Z" fill="url(#gC)" stroke="#606060" stroke-width="1.28" stroke-linejoin="round"/><g fill="#000"><rect x="319" y="54" width="2" height="2"/><rect x="319" y="75" width="2" height="2"/><rect x="322" y="54" width="2" height="2"/><rect x="322" y="75" width="2" height="2"/><rect x="325" y="54" width="2" height="2"/><rect x="325" y="75" width="2" height="2"/><rect x="328" y="54" width="2" height="2"/><rect x="328" y="75" width="2" height="2"/><rect x="331" y="54" width="2" height="2"/><rect x="331" y="75" width="2" height="2"/><rect x="334" y="54" width="2" height="2"/><rect x="334" y="75" width="2" height="2"/><rect x="337" y="54" width="2" height="2"/><rect x="337" y="75" width="2" height="2"/><rect x="340" y="54" width="2" height="2"/><rect x="340" y="75" width="2" height="2"/><rect x="319" y="57" width="2" height="2"/><rect x="340" y="57" width="2" height="2"/><rect x="319" y="60" width="2" height="2"/><rect x="340" y="60" width="2" height="2"/><rect x="319" y="63" width="2" height="2"/><rect x="340" y="63" width="2" height="2"/><rect x="319" y="66" width="2" height="2"/><rect x="340" y="66" width="2" height="2"/><rect x="319" y="69" width="2" height="2"/><rect x="340" y="69" width="2" height="2"/><rect x="319" y="72" width="2" height="2"/><rect x="340" y="72" width="2" height="2"/></g><rect x="322.5" y="57.5" width="15" height="15" fill="#e4e4f0" stroke="#9698a8"/><path d="M341.5 79.0h3.5v-3.5z" fill="#000"/><path d="M341.0 79.5l4.5-4.5" stroke="#fff" stroke-width=".6"/><g fill="#000"><rect x="351" y="54" width="2" height="2"/><rect x="351" y="75" width="2" height="2"/><rect x="354" y="54" width="2" height="2"/><rect x="354" y="75" width="2" height="2"/><rect x="357" y="54" width="2" height="2"/><rect x="357" y="75" width="2" height="2"/><rect x="360" y="54" width="2" height="2"/><rect x="360" y="75" width="2" height="2"/><rect x="363" y="54" width="2" height="2"/><rect x="363" y="75" width="2" height="2"/><rect x="366" y="54" width="2" height="2"/><rect x="366" y="75" width="2" height="2"/><rect x="351" y="57" width="2" height="2"/><rect x="366" y="57" width="2" height="2"/><rect x="351" y="60" width="2" height="2"/><rect x="366" y="60" width="2" height="2"/><rect x="351" y="63" width="2" height="2"/><rect x="366" y="63" width="2" height="2"/><rect x="351" y="66" width="2" height="2"/><rect x="366" y="66" width="2" height="2"/><rect x="351" y="69" width="2" height="2"/><rect x="366" y="69" width="2" height="2"/><rect x="351" y="72" width="2" height="2"/><rect x="366" y="72" width="2" height="2"/></g><rect x="354.5" y="57.5" width="10" height="15" fill="#e4e4f0" stroke="#9698a8"/><circle cx="368" cy="64.8" r="5.2" fill="#111"/><circle cx="368" cy="64.8" r="1.4" fill="#fff"/><g fill="#8a8a8a" stroke="#4a4a4a" stroke-width="1" stroke-linejoin="round"><path d="M399.7 54.5l3.5 5h-7zM399.7 76l3.5-5h-7zM389.2 65.2l5-3.5v7zM410.4 65.2l-5-3.5v7z"/></g><path d="M399.7 59v12.5M394 65.2h11.5" stroke="#4a4a4a" stroke-width="1.8"/><path d="M427.5 59.8A7.2 7.2 0 1 0 437 59.3" fill="none" stroke="#303030" stroke-width="3.900"/><path d="M427.5 59.8A7.2 7.2 0 1 0 437 59.3" fill="none" stroke="#9a9a9a" stroke-width="1.2"/><path d="M422.5 58.5l8.5-4 .3 8z" fill="#555" stroke="#2c2c2c" stroke-width=".8"/><rect x="456" y="57" width="16" height="16" fill="url(#gD)"/><rect x="456.7" y="63.7" width="9" height="9" fill="#fff" stroke="#e03030" stroke-width="1.4"/><path d="M475 79.0h3.5v-3.5z" fill="#000"/><path d="M474.5 79.5l4.5-4.5" stroke="#fff" stroke-width=".6"/><rect x="556.5" y="55.5" width="8" height="16" fill="#7a7c80" stroke="#1a237e"/><circle cx="560.5" cy="70.5" r="2" fill="#e01010"/><path d="M556.5 72.5a4 3 0 0 0 8 0" fill="none" stroke="#8088b0" stroke-width=".8"/><rect x="567.5" y="55.5" width="8" height="11" fill="#e8e8f0" stroke="#1a237e"/><circle cx="571.5" cy="66.5" r="2" fill="#e01010"/><path d="M567.5 68a4 3 0 0 0 8 0" fill="none" stroke="#8088b0" stroke-width=".8"/><path d="M576.5 79.0h3.5v-3.5z" fill="#000"/><path d="M576.0 79.5l4.5-4.5" stroke="#fff" stroke-width=".6"/><path d="M603.5 58.5v15M596.5 68.5l13-6.5" stroke="#404040" stroke-width="1.3"/><circle cx="603.5" cy="57.5" r="2.6" fill="url(#gBallY)"/><circle cx="610.5" cy="61.5" r="2.3" fill="url(#gBall)"/><circle cx="597" cy="68.5" r="2.5" fill="url(#gBall)"/><circle cx="604" cy="73" r="2.5" fill="url(#gBall)"/><g transform="translate(0,0)"><path d="M643.6 68.7L639.1 63.3A3.7 3.7 0 0 0 633.5 68.1L638 73.5" fill="none" stroke="#70281a" stroke-width="3.9"/><path d="M643.6 68.7L639.1 63.3A3.7 3.7 0 0 0 633.5 68.1L638 73.5" fill="none" stroke="#e8694c" stroke-width="2.8"/><path d="M642.9 67L639.4 62.9" fill="none" stroke="#f7b4a4" stroke-width="1"/><path d="M643.3 68.3L645 70.4M637.7 73.1L639.4 75.2" stroke="#8a8a90" stroke-width="3.6"/><path d="M643.5 68.5L644.8 70.1M637.9 73.3L639.2 74.9" stroke="#fff" stroke-width="2.8"/></g><path d="M652.5 79.0h3.5v-3.5z" fill="#000"/><path d="M652.0 79.5l4.5-4.5" stroke="#fff" stroke-width=".6"/><g transform="translate(32,0)"><path d="M643.6 68.7L639.1 63.3A3.7 3.7 0 0 0 633.5 68.1L638 73.5" fill="none" stroke="#70281a" stroke-width="3.9"/><path d="M643.6 68.7L639.1 63.3A3.7 3.7 0 0 0 633.5 68.1L638 73.5" fill="none" stroke="#e8694c" stroke-width="2.8"/><path d="M642.9 67L639.4 62.9" fill="none" stroke="#f7b4a4" stroke-width="1"/><path d="M643.3 68.3L645 70.4M637.7 73.1L639.4 75.2" stroke="#8a8a90" stroke-width="3.6"/><path d="M643.5 68.5L644.8 70.1M637.9 73.3L639.2 74.9" stroke="#fff" stroke-width="2.8"/></g><path d="M661.5 72.5h24.5M664.5 72L676 53.5M677.5 57.5c3.5 2.5 5.5 6.5 6 11.5" fill="none" stroke="#111" stroke-width="1.1"/><path d="M675.5 56l4.5 .5-2.5 3.5zM681.5 68l3.5-.5-1 3.5z" fill="#111"/><g transform="translate(64.6,0)"><path d="M643.6 68.7L639.1 63.3A3.7 3.7 0 0 0 633.5 68.1L638 73.5" fill="none" stroke="#70281a" stroke-width="3.9"/><path d="M643.6 68.7L639.1 63.3A3.7 3.7 0 0 0 633.5 68.1L638 73.5" fill="none" stroke="#e8694c" stroke-width="2.8"/><path d="M642.9 67L639.4 62.9" fill="none" stroke="#f7b4a4" stroke-width="1"/><path d="M643.3 68.3L645 70.4M637.7 73.1L639.4 75.2" stroke="#8a8a90" stroke-width="3.6"/><path d="M643.5 68.5L644.8 70.1M637.9 73.3L639.2 74.9" stroke="#fff" stroke-width="2.8"/></g><g transform="translate(96.5,0)"><path d="M643.6 68.7L639.1 63.3A3.7 3.7 0 0 0 633.5 68.1L638 73.5" fill="none" stroke="#70281a" stroke-width="3.9"/><path d="M643.6 68.7L639.1 63.3A3.7 3.7 0 0 0 633.5 68.1L638 73.5" fill="none" stroke="#e8694c" stroke-width="2.8"/><path d="M642.9 67L639.4 62.9" fill="none" stroke="#f7b4a4" stroke-width="1"/><path d="M643.3 68.3L645 70.4M637.7 73.1L639.4 75.2" stroke="#8a8a90" stroke-width="3.6"/><path d="M643.5 68.5L644.8 70.1M637.9 73.3L639.2 74.9" stroke="#fff" stroke-width="2.8"/></g><rect x="741.5" y="53.5" width="8" height="16" fill="#b8b8b8" stroke="#707070"/><rect x="741.5" y="61" width="8" height="1" fill="#707070"/><path d="M743 59l2.5-3 2.5 3zM743 64.5l2.5 3 2.5-3z" fill="#000"/><path transform="translate(778.5,56) scale(0.93)" d="M0 0V15.5L3.5 12.5L7 20.5L9.5 19.5L6.2 12H10.8Z" fill="url(#gC)" stroke="#707070" stroke-width="1.08" stroke-linejoin="round"/><path d="M924.5 56.5v17.5l7.5-11z" fill="#2f5568" stroke="#1c3038" stroke-width=".8"/><path d="M943.5 56.5v17.5l-7.5-11z" fill="#9aa8b8" stroke="#5a6878" stroke-width=".8"/><rect x="933" y="54" width="2" height="22" fill="#e06060"/><path d="M955.5 66.5l9-6.5 6.5 8-9 6.5z" fill="#3c6470" stroke="#1c3038" stroke-width=".9"/><path d="M965.5 59.5l6.5-4.5 5 6-6.5 4.5z" fill="#c8d0e0" stroke="#5a6878" stroke-width=".9"/><path d="M963 75.5l14.5-14.5" stroke="#f04040" stroke-width="1.4"/><path d="M977 79.0h3.5v-3.5z" fill="#000"/><path d="M976.5 79.5l4.5-4.5" stroke="#fff" stroke-width=".6"/><path d="M993.5 65.5h14l7.5 8h-14z" fill="#fff" stroke="#000" stroke-width="1.2"/><path d="M993.5 60.5h14l7.5 8h-14z" fill="#fff" stroke="#000" stroke-width="1.2"/><path d="M993.5 55.5h14l7.5 8h-14z" fill="#fff" stroke="#000" stroke-width="1.2"/><rect x="1030.5" y="57.5" width="21" height="17" fill="#fff" stroke="#333"/><rect x="1030.5" y="57.5" width="21" height="2.5" fill="#3838d8"/><path d="M1036.5 60v14.5M1037 64h14.5M1037 67.5h14.5M1037 71h14.5" stroke="#555" stroke-width=".8"/><path d="M1045.5 60v14.5" stroke="#20c020" stroke-width="1.3"/><path d="M1037 69l4.5-5.5 4 4.5 6 0" fill="none" stroke="#d03030" stroke-width=".9"/><path d="M1032 62.5h3M1032 65h3M1032 67.5h3M1032 70h3M1032 72.5h3" stroke="#2828b0" stroke-width="1"/><rect x="1063.5" y="54.5" width="21" height="21" fill="#c5c5c5" stroke="#222"/><rect x="1067.5" y="56.5" width="13" height="4.5" fill="#ffe020" stroke="#111"/><rect x="1067.5" y="67.5" width="13" height="5" fill="#b0b0b0" stroke="#111"/><path d="M1074 61.5v4M1071.5 64h5l-2.5 3z" stroke="#e02020" fill="#e02020" stroke-width="1.4"/><circle cx="1106.5" cy="59.5" r="4.8" fill="url(#gS1)"/><circle cx="1117.5" cy="59.5" r="4.8" fill="url(#gS2)"/><circle cx="1106.5" cy="70.5" r="4.8" fill="url(#gS3)"/><circle cx="1117.5" cy="70.5" r="4.8" fill="url(#gS4)"/><rect x="1138.5" y="53.5" width="14" height="8" fill="#fff" stroke="#333"/><rect x="1138.5" y="53.5" width="14" height="2.5" fill="#3838d8"/><path d="M1139 64c2 1 3 4 5 6 2 2 5 2 7 2v-9c-2-1-4-.5-5 1-2-2-5-1-7 0z" fill="#5a98a8" stroke="#2a4858" stroke-width=".8"/></svg>
<svg style="left:968px;top:85px" width="184" height="62" viewBox="968 85 184 62"><defs>
<radialGradient id="pS" cx=".35" cy=".32" r=".75"><stop offset="0" stop-color="#f0f0f0"/><stop offset=".35" stop-color="#8a8c90"/><stop offset="1" stop-color="#3a3c40"/></radialGradient>
<radialGradient id="pStar" cx=".5" cy=".5" r=".5"><stop offset="0" stop-color="#ffffff"/><stop offset=".6" stop-color="#fbf8dc"/><stop offset="1" stop-color="#efe9c8" stop-opacity="0"/></radialGradient>
<linearGradient id="pTube" gradientUnits="userSpaceOnUse" x1="1010" y1="94" x2="1021" y2="106"><stop offset="0" stop-color="#39446e"/><stop offset=".3" stop-color="#c8d0ea"/><stop offset=".55" stop-color="#5a6898"/><stop offset="1" stop-color="#141a30"/></linearGradient>
<linearGradient id="pB" x1="0" x2="1" y1="0" y2="1"><stop offset="0" stop-color="#f6f6fb"/><stop offset="1" stop-color="#cfd1e2"/></linearGradient>
<linearGradient id="pC" x1="0" x2="1" y1="0" y2="1"><stop offset="0" stop-color="#ffffff"/><stop offset="1" stop-color="#d0d0d0"/></linearGradient>
</defs><circle cx="982.5" cy="96" r="6.5" fill="url(#pStar)"/><path d="M982.5 89.5v13M976 96h13M978 91.5l9 9M987 91.5l-9 9" stroke="#fffbe6" stroke-width="1"/><path d="M983 96L987.3 107.6L989.6 104.9L993.2 109.8L995 108.5L991.4 103.6L994.3 102.3Z" fill="#fff" stroke="#3a3a3a" stroke-width=".9" stroke-linejoin="round" stroke-dasharray="1.6 .7"/><g fill="none"><path d="M1007.4 108A15.6 15.6 0 0 1 1023 92.4" stroke="#444e8a" stroke-width="4.8"/><path d="M1006.8 108A16.2 16.2 0 0 1 1023 91.8" stroke="#8e98c8" stroke-width="1.9"/><path d="M1006.7 108A16.3 16.3 0 0 1 1023 91.7" stroke="#f2f6ff" stroke-width="1"/><path d="M1005.1 108A17.9 17.9 0 0 1 1023 90.1" stroke="#2a3366" stroke-width=".9"/><path d="M1011.4 108A11.6 11.6 0 0 1 1023 96.4" stroke="#363e78" stroke-width="3.4"/><path d="M1010.8 108A12.2 12.2 0 0 1 1023 95.8" stroke="#6670a8" stroke-width="1"/><path d="M1009.6 108A13.4 13.4 0 0 1 1023 94.6" stroke="#0c0c1c" stroke-width="1"/><path d="M1013 108A10 10 0 0 1 1023 98" stroke="#0c0c1c" stroke-width="1"/></g><path d="M1005.5 91.5h17.5v16.5" fill="none" stroke="#8a8a8a" stroke-width=".6" stroke-dasharray="1 1"/><rect x="1004.5" y="90.5" width="1.5" height="1.5" fill="#000"/><rect x="1022" y="107" width="1.5" height="1.5" fill="#000"/><path d="M1043 98v6M1043 98l-7.5 6.5M1043 98l7.5 6.5" stroke="#3a3a60" stroke-width="1"/><rect x="1042" y="98" width="2" height="6" fill="#9090a0"/><rect x="1039.5" y="90.5" width="7" height="7" fill="url(#pB)" stroke="#403a78"/><rect x="1033.5" y="104.5" width="4.5" height="4.5" fill="#fff" stroke="#403a78"/><rect x="1040.7" y="104.5" width="4.5" height="4.5" fill="#fff" stroke="#403a78"/><rect x="1048" y="104.5" width="4.5" height="4.5" fill="#fff" stroke="#403a78"/><circle cx="1074.5" cy="100" r="6.9" fill="#d4d4d4" stroke="#111" stroke-width="1.7"/><path d="M1074.5 94v12M1069.3 97l10.4 6M1069.3 103l10.4-6" stroke="#555" stroke-width=".8"/><circle cx="1074.5" cy="100" r="1.7" fill="#e03030"/><path d="M1066 93.5a10 10 0 0 0 0 13M1063.5 92.5a13 13 0 0 0 0 15" fill="none" stroke="#808088" stroke-width=".9"/><rect x="1092" y="92" width="18" height="14.5" rx="1.5" fill="#fff" stroke="#222" stroke-width="1.8"/><rect x="1096" y="94.5" width="3.5" height="8" fill="#3a50c0" stroke="#203080" stroke-width=".6"/><path d="M1103 95.5l3.5 8h-7z" fill="#e02828"/><rect x="1095" y="107.5" width="12" height="1.8" fill="#555"/><rect x="1101.5" y="107.3" width="2.5" height="1.5" fill="#20c040"/><path d="M1122 93c1.5-2.5 5-3 8-3h4c2 .3 3 1.5 3.3 3.5l-1.3.3c-.6-1.2-1.5-1.8-3-1.8v2.5h-5v-2.5c-2.5 0-4 .8-5 1.8z" fill="#555" stroke="#222" stroke-width=".7"/><path d="M1128.7 96h2.6l.9 13h-4.4z" fill="#c03020" stroke="#401008" stroke-width=".6"/><path d="M1128.3 103h3.5l.4 6h-4.4z" fill="#222"/><path d="M1130 90.3h3" stroke="#eee" stroke-width="1"/><circle cx="988.6" cy="132.5" r="6.9" fill="url(#pS)"/><rect x="1006.5" y="128.5" width="8" height="9" fill="#b8b8c0" stroke="#a08820" stroke-width=".8"/><path d="M1018 126l3.5 7.5h-7z" fill="#333"/><circle cx="1015.3" cy="136.3" r="4.8" fill="#fff" stroke="#111" stroke-width="1.4"/><circle cx="1015.5" cy="136.5" r=".9" fill="#111"/><defs><radialGradient id="pGlow" cx=".5" cy=".5" r=".5"><stop offset="0" stop-color="#fff8a0"/><stop offset=".6" stop-color="#f8f0a8" stop-opacity=".85"/><stop offset="1" stop-color="#f0e8b0" stop-opacity="0"/></radialGradient></defs><circle cx="1039" cy="134.5" r="5" fill="url(#pGlow)"/><path d="M1029.3 126.6L1031 125.2L1036.8 130.8L1034.2 133.2Z" fill="#e8e8f0" stroke="#222" stroke-width=".8"/><path d="M1029 126.8L1034.6 133.4" stroke="#111" stroke-width="1.3"/><path d="M1034.2 133.4l1.6 2.4M1036.8 129.5h4.8" stroke="#333" stroke-width="1.2"/><path d="M1036 132l7.5 6" stroke="#222" stroke-width=".8" stroke-dasharray="1.5 .8"/><circle cx="1043.7" cy="138.2" r=".9" fill="#111"/><circle cx="1056.4" cy="129" r="2.6" fill="#fff" stroke="#111" stroke-width="1.1"/><circle cx="1063" cy="129" r="2.6" fill="#fff" stroke="#111" stroke-width="1.1"/><circle cx="1056.4" cy="129" r=".8" fill="#111"/><circle cx="1063" cy="129" r=".9" fill="#111"/><rect x="1054" y="132" width="11" height="5" fill="#111"/><rect x="1057.6" y="133.3" width="6" height="2.4" fill="#f0f0f0"/><rect x="1054.4" y="133" width="2.4" height="3" fill="#e02020"/><path d="M1065 134.5l2.7-1.8v5l-2.7-1.8z" fill="#111"/><rect x="1058" y="137.4" width="4.5" height="1.1" fill="#555"/><rect x="1077.5" y="128.5" width="10.5" height="9" rx="1" fill="#d4d8e0" stroke="#777" stroke-width="1"/><circle cx="1082.7" cy="133" r="2.8" fill="#f4f4f8" stroke="#8890b0" stroke-width=".8"/><rect x="1088" y="132" width="2" height="4.5" fill="#e02020"/><path d="M1088 138h4.5" stroke="#333" stroke-width="1"/><rect x="1092" y="137.5" width="1.5" height="1.5" fill="#111"/><path d="M1101.3 131.2Q1103.5 127.3 1105.8 130.3T1110.3 130.3T1114.8 130.3Q1116 128.7 1117.3 129.0" fill="none" stroke="#283890" stroke-width="1"/><path d="M1101.3 135.3Q1103.5 131.4 1105.8 134.4T1110.3 134.4T1114.8 134.4Q1116 132.8 1117.3 133.1" fill="none" stroke="#283890" stroke-width="1"/><path d="M1101.3 139.4Q1103.5 135.5 1105.8 138.5T1110.3 138.5T1114.8 138.5Q1116 136.9 1117.3 137.2" fill="none" stroke="#283890" stroke-width="1"/><path d="M1132.9 130.5L1135.7 130.5" stroke="#444" stroke-width="1.5"/><path d="M1132.2 132.2L1134.2 134.2" stroke="#444" stroke-width="1.5"/><path d="M1130.5 132.9L1130.5 135.7" stroke="#444" stroke-width="1.5"/><path d="M1128.8 132.2L1126.8 134.2" stroke="#444" stroke-width="1.5"/><path d="M1128.1 130.5L1125.3 130.5" stroke="#444" stroke-width="1.5"/><path d="M1128.8 128.8L1126.8 126.8" stroke="#444" stroke-width="1.5"/><path d="M1130.5 128.1L1130.5 125.3" stroke="#444" stroke-width="1.5"/><path d="M1132.2 128.8L1134.2 126.8" stroke="#444" stroke-width="1.5"/><circle cx="1130.5" cy="130.5" r="3.4" fill="#bbb" stroke="#444" stroke-width="1.2"/><circle cx="1130.5" cy="130.5" r="1.3" fill="#444"/><path d="M1137.7 136.0L1140.5 136.0" stroke="#111" stroke-width="1.5"/><path d="M1137.1 137.6L1139.0 139.5" stroke="#111" stroke-width="1.5"/><path d="M1135.5 138.2L1135.5 141.0" stroke="#111" stroke-width="1.5"/><path d="M1133.9 137.6L1132.0 139.5" stroke="#111" stroke-width="1.5"/><path d="M1133.3 136.0L1130.5 136.0" stroke="#111" stroke-width="1.5"/><path d="M1133.9 134.4L1132.0 132.5" stroke="#111" stroke-width="1.5"/><path d="M1135.5 133.8L1135.5 131.0" stroke="#111" stroke-width="1.5"/><path d="M1137.1 134.4L1139.0 132.5" stroke="#111" stroke-width="1.5"/><circle cx="1135.5" cy="136" r="3.2" fill="#555" stroke="#111" stroke-width="1.2"/><circle cx="1135.5" cy="136" r="1.2" fill="#99a"/></svg>
<svg style="left:0;top:758px" width="1152" height="78" viewBox="0 758 1152 78"><rect x="13.5" y="763.5" width="16" height="5" fill="none" stroke="#111" stroke-width="1"/><path d="M15 766.5c2-2 4-2 6 0s5 1 7-1" fill="none" stroke="#111" stroke-width=".9"/><rect x="13.5" y="776" width="16" height="2.5" fill="none" stroke="#111" stroke-width="1"/><path d="M17.5 775v-5M15.5 772l2-2 2 2M25.5 770v5M23.5 773l2 2 2-2" fill="none" stroke="#111" stroke-width="1"/><path d="M318 797v-3a2.2 2.2 0 0 1 4.4 0v3" fill="none" stroke="#222" stroke-width="1.2"/><rect x="316.5" y="797" width="7.5" height="5.5" fill="#222"/><path d="M317 799h6.5M317 801h6.5" stroke="#ccc" stroke-width=".7"/><rect x="340.5" y="790.5" width="13.5" height="13.5" fill="#c5c5c5" stroke="#000" stroke-width="1.3"/><path d="M347.3 791v13M341 797.3h13" stroke="#000" stroke-width=".8"/><circle cx="347.3" cy="797.3" r="2" fill="#c5c5c5" stroke="#000" stroke-width="1.2"/><g fill="none" stroke="#8e8e8e" stroke-width="1.3"><path d="M722.5 804l-2 3v3l2 3h3l2-3v-3l-2-3z"/><path d="M727.5 807.5h16M727.5 809.5h16M738 810v3.5h3V810"/></g><g fill="#111"><rect x="932" y="793" width="2" height="9"/><path d="M941 793v9l-6.5-4.5zM948 793v9l-6.5-4.5z"/><path d="M966 793.5v8l-6-4z"/><rect x="967" y="793.5" width="2" height="8"/><rect x="970.5" y="793.5" width="2" height="8"/><rect x="1005" y="793.5" width="2" height="8"/><rect x="1008.5" y="793.5" width="2" height="8"/><path d="M1012 793.5v8l6-4z"/><path d="M1030 793v9l6.5-4.5zM1037 793v9l6.5-4.5z"/><rect x="1044" y="793" width="2" height="9"/><path d="M985.5 793.5v8l7-4z"/><rect x="935" y="815" width="1.5" height="8"/><path d="M941 815.5v7l-4.5-3.5zM941 815.5v7l4.5-3.5z"/><rect x="945.5" y="815" width="1.5" height="8"/><path d="M1021.5 818.5l3-3.5 3 3.5zM1021.5 822l3 3.5 3-3.5z"/></g><rect x="982" y="791" width="14" height="13" fill="none" stroke="#111" stroke-width="2"/><path d="M997 807.5h2.5v-2.5z" fill="#111"/><rect x="1020" y="812" width="9" height="17" fill="none" stroke="#e8e8e8" stroke-width="0"/><rect x="1036.5" y="813.5" width="10" height="9" fill="#e8e8e8" stroke="#222" stroke-width="1"/><rect x="1036.5" y="813.5" width="10" height="2" fill="#222"/><circle cx="1044.5" cy="821.5" r="3.6" fill="#e8e8e8" stroke="#a01818" stroke-width="1"/><path d="M1044.5 819.5v2.5h2" fill="none" stroke="#222" stroke-width=".9"/><circle cx="1065.5" cy="795.5" r="4.6" fill="#dcdcdc" stroke="#181890" stroke-width="1.2"/><path d="M1068.7 798.7l5 5" stroke="#2020c0" stroke-width="2"/><path d="M1069.2 798.4l5 5" stroke="#111" stroke-width=".7"/><rect x="1085.5" y="790.5" width="12" height="9.5" fill="#d0d0d0" stroke="#8a1c1c" stroke-width="1.3"/><path d="M1091.5 790.5v9.5M1085.5 795.2h12" stroke="#8a1c1c" stroke-width="1.3"/><circle cx="1086.5" cy="799" r="3.6" fill="#dcdcdc" stroke="#181890" stroke-width="1.2"/><path d="M1089.0 801.5l4 4" stroke="#2020c0" stroke-width="2"/><path d="M1089.5 801.2l4 4" stroke="#111" stroke-width=".7"/><path d="M1107.5 794.0l2.5-2.5h8.5v8.5l-2.5 2.5z" fill="#e8e8e8" stroke="#181890" stroke-width="1.1"/><rect x="1107.5" y="794.0" width="8.5" height="8.5" fill="#d0d0d0" stroke="#181890" stroke-width="1.1"/><path d="M1116.0 794.0l2.5-2.5v8.5l-2.5 2.5z" fill="#8c8c8c" stroke="#181890" stroke-width=".8"/><path d="M1105.5 793v-2.5h2.5M1118 790.5h2.5v2.5M1105.5 802v2.5h2.5M1118 804.5h2.5v-2.5" fill="none" stroke="#111" stroke-width="1.2"/><path d="M1121 808h3v-3z" fill="#111"/><rect x="1131.5" y="790.5" width="12" height="9.5" fill="#d0d0d0" stroke="#8a1c1c" stroke-width="1.3"/><path d="M1137.5 790.5v9.5M1131.5 795.2h12" stroke="#8a1c1c" stroke-width="1.3"/><path d="M1128.5 798.0l2.5-2.5h6.5v6.5l-2.5 2.5z" fill="#e8e8e8" stroke="#181890" stroke-width="1.1"/><rect x="1128.5" y="798.0" width="6.5" height="6.5" fill="#d0d0d0" stroke="#181890" stroke-width="1.1"/><path d="M1135.0 798.0l2.5-2.5v6.5l-2.5 2.5z" fill="#8c8c8c" stroke="#181890" stroke-width=".8"/><path d="M1144 808h3v-3z" fill="#111"/><rect x="1059.5" y="812.5" width="15" height="14" fill="#e6e6e6" stroke="#111" stroke-width="1.3" stroke-dasharray="3 1.5"/><circle cx="1065.5" cy="818" r="3.3" fill="#dcdcdc" stroke="#181890" stroke-width="1.2"/><path d="M1067.8 820.3l4 4" stroke="#2020c0" stroke-width="2"/><path d="M1068.3 820.0l4 4" stroke="#111" stroke-width=".7"/><path d="M1084.5 820.5l-2-2.5c-.8-1.5 1-2.5 2-1.2l1.5 1.7v-4.5c0-1.5 2-1.5 2 0v-1.5c0-1.5 2-1.5 2.2 0v1c0-1.5 2-1.5 2.2 0v1.5c0-1.300 2-1.300 2 0v6c0 2-1 3-2 5h-6c-1-2-2.5-3.5-3.9-5.5z" fill="#e8e8e8" stroke="#111" stroke-width="1"/><circle cx="1112.5" cy="820" r="5" fill="none" stroke="#111" stroke-width="1.1"/><path d="M1112.5 820v-7.5M1112.5 820h8M1112.5 820l-6 6" stroke="#181890" stroke-width="1.2"/><path d="M1110.5 814l2-2.5 2 2.5zM1119 818l2.5 2-2.5 2zM1105.5 823.5v3.5h3.5z" fill="#111"/><circle cx="1112.5" cy="820" r="1.5" fill="#181890"/><path d="M1121 830h3v-3z" fill="#111"/><rect x="1136.5" y="819.5" width="7" height="7" fill="#c5c5c5" stroke="#111" stroke-width="1.3"/><rect x="1129.5" y="812.5" width="10" height="10" fill="#c5c5c5" stroke="#181890" stroke-width="1.3"/><path d="M1132 815l5.5 5.5" stroke="#111" stroke-width="1" stroke-dasharray="1.5 1"/><path d="M1131.5 817.5v-3h3z" fill="#111"/></svg>
<svg id="txt" style="left:0;top:0" width="1152" height="836" viewBox="0 0 1152 836">
<text x="22.50" y="18.6" font-size="14" fill="#0a1f7a" font-weight="bold" textLength="266.48" lengthAdjust="spacingAndGlyphs">Untitled - 3ds max 7  - Stand-alone License</text>
<text x="21.50" y="17.6" font-size="14" fill="#fff" font-weight="bold" textLength="266.48" lengthAdjust="spacingAndGlyphs">Untitled - 3ds max 7  - Stand-alone License</text>
<text x="5.80" y="39" font-size="11" fill="#000" textLength="15.38" lengthAdjust="spacingAndGlyphs">File</text>
<text x="33.30" y="39" font-size="11" fill="#000" textLength="17.52" lengthAdjust="spacingAndGlyphs">Edit</text>
<text x="64.20" y="39" font-size="11" fill="#000" textLength="24.09" lengthAdjust="spacingAndGlyphs">Tools</text>
<text x="100.50" y="39" font-size="11" fill="#000" textLength="28.71" lengthAdjust="spacingAndGlyphs">Group</text>
<text x="141.70" y="39" font-size="11" fill="#000" textLength="26.62" lengthAdjust="spacingAndGlyphs">Views</text>
<text x="180.80" y="39" font-size="11" fill="#000" textLength="32.42" lengthAdjust="spacingAndGlyphs">Create</text>
<text x="225.30" y="39" font-size="11" fill="#000" textLength="43.00" lengthAdjust="spacingAndGlyphs">Modifiers</text>
<text x="280.80" y="39" font-size="11" fill="#000" textLength="46.99" lengthAdjust="spacingAndGlyphs">Character</text>
<text x="340.80" y="39" font-size="11" fill="#000" textLength="34.19" lengthAdjust="spacingAndGlyphs">reactor</text>
<text x="388.20" y="39" font-size="11" fill="#000" textLength="45.78" lengthAdjust="spacingAndGlyphs">Animation</text>
<text x="446.80" y="39" font-size="11" fill="#000" textLength="64.69" lengthAdjust="spacingAndGlyphs">Graph Editors</text>
<text x="523.70" y="39" font-size="11" fill="#000" textLength="48.61" lengthAdjust="spacingAndGlyphs">Rendering</text>
<text x="585.20" y="39" font-size="11" fill="#000" textLength="47.82" lengthAdjust="spacingAndGlyphs">Customize</text>
<text x="645.70" y="39" font-size="11" fill="#000" textLength="47.32" lengthAdjust="spacingAndGlyphs">MAXScript</text>
<text x="705.70" y="39" font-size="11" fill="#000" textLength="20.60" lengthAdjust="spacingAndGlyphs">Help</text>
<text x="184.00" y="64.5" font-size="12" fill="#000" textLength="12.40" lengthAdjust="spacingAndGlyphs">All</text>
<text x="484.00" y="64.5" font-size="12" fill="#000" textLength="23.99" lengthAdjust="spacingAndGlyphs">View</text>
<text x="6.30" y="99.3" font-size="11.8" fill="#d4d4d4" textLength="18.51" lengthAdjust="spacingAndGlyphs">Top</text>
<text x="27.50" y="683" font-size="10" fill="#00a800" textLength="5.00" lengthAdjust="spacingAndGlyphs">y</text>
<text x="28.00" y="708" font-size="10" fill="#0000e0" font-weight="bold" textLength="5.00" lengthAdjust="spacingAndGlyphs">z</text>
<text x="53.00" y="708" font-size="10" fill="#e00000" font-weight="bold" textLength="5.56" lengthAdjust="spacingAndGlyphs">x</text>
<text x="61.50" y="752.2" font-size="12.5" fill="#000" textLength="34.98" lengthAdjust="spacingAndGlyphs">0 / 100</text>
<text x="5.00" y="751" font-size="11" fill="#000" textLength="7.07" lengthAdjust="spacingAndGlyphs">&lt;</text>
<text x="145.00" y="751" font-size="11" fill="#000" textLength="7.07" lengthAdjust="spacingAndGlyphs">></text>
<text x="51.30" y="781.2" font-size="12.5" fill="#000" textLength="6.01" lengthAdjust="spacingAndGlyphs">0</text>
<text x="134.97" y="781.2" font-size="12.5" fill="#000" textLength="11.12" lengthAdjust="spacingAndGlyphs">10</text>
<text x="220.94" y="781.2" font-size="12.5" fill="#000" textLength="11.12" lengthAdjust="spacingAndGlyphs">20</text>
<text x="306.91" y="781.2" font-size="12.5" fill="#000" textLength="11.12" lengthAdjust="spacingAndGlyphs">30</text>
<text x="392.88" y="781.2" font-size="12.5" fill="#000" textLength="11.12" lengthAdjust="spacingAndGlyphs">40</text>
<text x="478.85" y="781.2" font-size="12.5" fill="#000" textLength="11.12" lengthAdjust="spacingAndGlyphs">50</text>
<text x="564.82" y="781.2" font-size="12.5" fill="#000" textLength="11.12" lengthAdjust="spacingAndGlyphs">60</text>
<text x="650.79" y="781.2" font-size="12.5" fill="#000" textLength="11.12" lengthAdjust="spacingAndGlyphs">70</text>
<text x="736.76" y="781.2" font-size="12.5" fill="#000" textLength="11.12" lengthAdjust="spacingAndGlyphs">80</text>
<text x="822.73" y="781.2" font-size="12.5" fill="#000" textLength="11.12" lengthAdjust="spacingAndGlyphs">90</text>
<text x="906.00" y="781.2" font-size="12.5" fill="#000" textLength="17.28" lengthAdjust="spacingAndGlyphs">100</text>
<text x="113.60" y="802.7" font-size="12.5" fill="#000" textLength="70.90" lengthAdjust="spacingAndGlyphs">None Selected</text>
<text x="113.60" y="828.2" font-size="12.5" fill="#000" textLength="189.39" lengthAdjust="spacingAndGlyphs">Click and drag to begin creation process</text>
<text x="362.50" y="802.7" font-size="12.5" fill="#000" textLength="9.50" lengthAdjust="spacingAndGlyphs">X:</text>
<text x="377.50" y="802.7" font-size="12.5" fill="#808080" textLength="26.47" lengthAdjust="spacingAndGlyphs">9.336</text>
<text x="445.00" y="802.7" font-size="12.5" fill="#000" textLength="9.00" lengthAdjust="spacingAndGlyphs">Y:</text>
<text x="459.70" y="802.7" font-size="12.5" fill="#808080" textLength="35.02" lengthAdjust="spacingAndGlyphs">-57.884</text>
<text x="526.70" y="802.7" font-size="12.5" fill="#000" textLength="9.09" lengthAdjust="spacingAndGlyphs">Z:</text>
<text x="541.70" y="802.7" font-size="12.5" fill="#808080" textLength="14.60" lengthAdjust="spacingAndGlyphs">0.0</text>
<text x="615.50" y="802.7" font-size="12.5" fill="#000" textLength="51.50" lengthAdjust="spacingAndGlyphs">Grid = 10.0</text>
<text x="615.00" y="828.2" font-size="12.5" fill="#000" textLength="67.02" lengthAdjust="spacingAndGlyphs">Add Time Tag</text>
<text x="760.30" y="802.7" font-size="12.5" fill="#000" textLength="42.68" lengthAdjust="spacingAndGlyphs">Auto Key</text>
<text x="763.50" y="824.6" font-size="12.5" fill="#000" textLength="36.82" lengthAdjust="spacingAndGlyphs">Set Key</text>
<text x="812.50" y="801.3" font-size="12.5" fill="#000" textLength="42.02" lengthAdjust="spacingAndGlyphs">Selected</text>
<text x="838.50" y="824.6" font-size="12.5" fill="#000" textLength="56.52" lengthAdjust="spacingAndGlyphs">Key Filters...</text>
<text x="960.20" y="823.8" font-size="12.5" fill="#000" textLength="5.11" lengthAdjust="spacingAndGlyphs">0</text>
<text x="993.50" y="164.7" font-size="12.5" fill="#000" textLength="33.50" lengthAdjust="spacingAndGlyphs">Splines</text>
<text x="1029.80" y="194.8" font-size="12.5" fill="#000" textLength="57.58" lengthAdjust="spacingAndGlyphs">Object Type</text>
<text x="1020.80" y="380.8" font-size="12.5" fill="#000" textLength="75.62" lengthAdjust="spacingAndGlyphs">Name and Color</text>
<text x="1034.30" y="438.8" font-size="12.5" fill="#000" textLength="48.59" lengthAdjust="spacingAndGlyphs">Rendering</text>
<text x="1029.50" y="458.8" font-size="12.5" fill="#000" textLength="58.19" lengthAdjust="spacingAndGlyphs">Interpolation</text>
<text x="1019.80" y="478.8" font-size="12.5" fill="#000" textLength="77.58" lengthAdjust="spacingAndGlyphs">Creation Method</text>
<text x="1022.80" y="643.8" font-size="12.5" fill="#000" textLength="71.58" lengthAdjust="spacingAndGlyphs">Keyboard Entry</text>
<text x="1030.30" y="212.7" font-size="12.5" fill="#000" textLength="40.51" lengthAdjust="spacingAndGlyphs">AutoGrid</text>
<text x="1008.75" y="248.7" font-size="12.5" fill="#000" textLength="21.51" lengthAdjust="spacingAndGlyphs">Line</text>
<text x="1073.25" y="248.7" font-size="12.5" fill="#000" textLength="48.48" lengthAdjust="spacingAndGlyphs">Rectangle</text>
<text x="1006.50" y="269.7" font-size="12.5" fill="#000" textLength="26.01" lengthAdjust="spacingAndGlyphs">Circle</text>
<text x="1082.75" y="269.7" font-size="12.5" fill="#000" textLength="29.51" lengthAdjust="spacingAndGlyphs">Ellipse</text>
<text x="1011.25" y="290.7" font-size="12.5" fill="#000" textLength="16.50" lengthAdjust="spacingAndGlyphs">Arc</text>
<text x="1083.00" y="290.7" font-size="12.5" fill="#000" textLength="28.98" lengthAdjust="spacingAndGlyphs">Donut</text>
<text x="1005.50" y="311.7" font-size="12.5" fill="#000" textLength="28.03" lengthAdjust="spacingAndGlyphs">NGon</text>
<text x="1088.00" y="311.7" font-size="12.5" fill="#000" textLength="18.99" lengthAdjust="spacingAndGlyphs">Star</text>
<text x="1009.25" y="332.7" font-size="12.5" fill="#000" textLength="20.49" lengthAdjust="spacingAndGlyphs">Text</text>
<text x="1086.00" y="332.7" font-size="12.5" fill="#000" textLength="22.98" lengthAdjust="spacingAndGlyphs">Helix</text>
<text x="1001.50" y="353.7" font-size="12.5" fill="#000" textLength="36.01" lengthAdjust="spacingAndGlyphs">Section</text>
<text x="992.30" y="496.6" font-size="12.5" fill="#000" textLength="50.72" lengthAdjust="spacingAndGlyphs">Initial Type</text>
<text x="992.30" y="552.6" font-size="12.5" fill="#000" textLength="49.70" lengthAdjust="spacingAndGlyphs">Drag Type</text>
<text x="1051.80" y="515.8" font-size="12.5" fill="#000" textLength="30.72" lengthAdjust="spacingAndGlyphs">Corner</text>
<text x="1051.80" y="531.8" font-size="12.5" fill="#000" textLength="35.51" lengthAdjust="spacingAndGlyphs">Smooth</text>
<text x="1051.80" y="572.8" font-size="12.5" fill="#000" textLength="30.72" lengthAdjust="spacingAndGlyphs">Corner</text>
<text x="1051.80" y="590.8" font-size="12.5" fill="#000" textLength="35.51" lengthAdjust="spacingAndGlyphs">Smooth</text>
<text x="1051.80" y="608.8" font-size="12.5" fill="#000" textLength="28.50" lengthAdjust="spacingAndGlyphs">Bezier</text>
<text x="645.00" y="63" font-size="11" fill="#000" font-weight="bold" textLength="5.99" lengthAdjust="spacingAndGlyphs">3</text>
<text x="705.50" y="63.5" font-size="12" fill="#000" font-weight="bold" textLength="12.48" lengthAdjust="spacingAndGlyphs">%</text>
<text x="764.30" y="65.2" font-size="14.5" fill="#404040" textLength="4.43" lengthAdjust="spacingAndGlyphs">{</text>
<text x="772.30" y="65.2" font-size="14.5" fill="#404040" textLength="4.43" lengthAdjust="spacingAndGlyphs">}</text>
<text x="764.50" y="75.2" font-size="5.5" fill="#303030" font-weight="bold" textLength="12.48" lengthAdjust="spacingAndGlyphs">ABC</text>
</svg>
</div></body></html>
